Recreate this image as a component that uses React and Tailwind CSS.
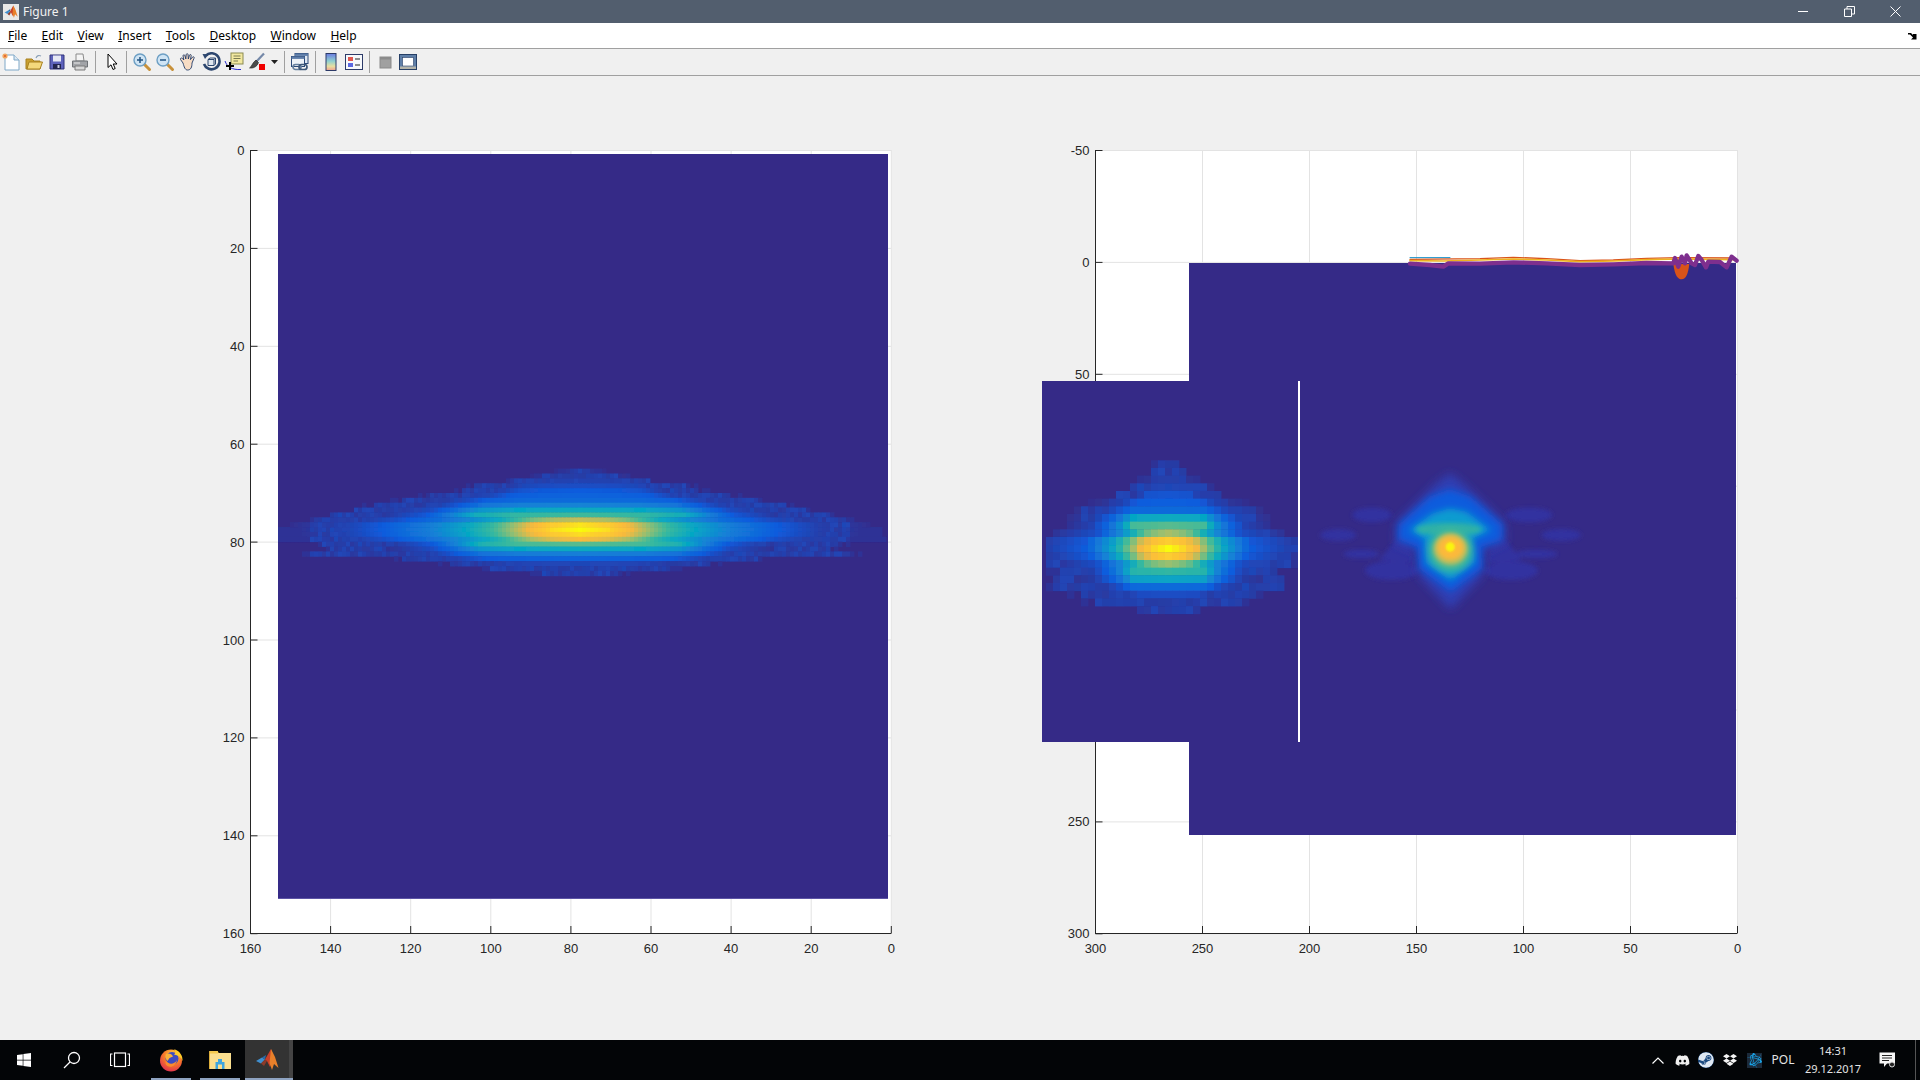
import React from 'react';
import { FaDiscord, FaSteam, FaDropbox, FaWindows, FaBattleNet } from 'react-icons/fa6';

const PARULA = [
  [0, [53, 42, 135]],
  [0.14, [15, 92, 221]],
  [0.29, [20, 129, 214]],
  [0.43, [6, 167, 196]],
  [0.57, [56, 185, 158]],
  [0.71, [146, 191, 115]],
  [0.86, [250, 186, 60]],
  [0.94, [252, 206, 46]],
  [1, [249, 251, 14]],
];

const interp = (tab, x) => {
  if (x <= tab[0][0]) return tab[0][1];
  for (let i = 1; i < tab.length; i++) {
    if (x <= tab[i][0]) {
      const t = (x - tab[i - 1][0]) / (tab[i][0] - tab[i - 1][0]);
      return tab[i - 1][1] + t * (tab[i][1] - tab[i - 1][1]);
    }
  }
  return tab[tab.length - 1][1];
};

const parula = (v) => {
  for (let i = 1; i < PARULA.length; i++) {
    if (v <= PARULA[i][0]) {
      const [a, ca] = PARULA[i - 1];
      const [b, cb] = PARULA[i];
      const t = (v - a) / (b - a);
      return `rgb(${ca.map((c, k) => Math.round(c + t * (cb[k] - c))).join(',')})`;
    }
  }
  return 'rgb(249,251,14)';
};

const noise = (a, b) => {
  const s = Math.sin(a * 12.9898 + b * 78.233) * 43758.5453;
  return s - Math.floor(s);
};

const wideCore = [[0, 1], [28, 0.96], [51, 0.86], [87, 0.58], [115, 0.43], [150, 0.28], [198, 0.14], [240, 0.06], [280, 0.025], [300, 0]];
const wideLobe = [[0, 1], [60, 0.95], [95, 0.8], [120, 0.45], [140, 0.22], [175, 0.08], [200, 0]];
const tallCore = [[0, 1], [12, 0.96], [25, 0.86], [40, 0.6], [50, 0.43], [75, 0.14], [115, 0.05], [130, 0]];
const tallLobe = [[0, 1], [36, 0.95], [46, 0.6], [60, 0.3], [75, 0.12], [95, 0.05], [110, 0]];

// row offset: [peak, width scale, half width of the faint outline, uses core profile]
const leftBlob = {
  cx: 580, cy: 529.5, cw: 4, ch: 4.87, core: wideCore, lobe: wideLobe, minCol: -75, maxCol: 76,
  gaps: { '-3': [160, 200], 4: [150, 195] },
  rows: {
    '-12': [0.03, 0.2, 10], '-11': [0.05, 0.35, 40], '-10': [0.07, 0.45, 70], '-9': [0.1, 0.6, 105], '-8': [0.14, 0.65, 120],
    '-7': [0.17, 0.75, 150], '-6': [0.2, 0.95, 180], '-5': [0.3, 1, 205], '-4': [0.45, 1.05, 225], '-3': [0.58, 1.1, 250],
    '-2': [0.78, 0.92, 265, 1], '-1': [0.97, 1, 270, 1], 0: [1, 1, 304, 1], 1: [0.96, 1, 304, 1], 2: [0.86, 0.95, 304, 1],
    3: [0.62, 1.05, 260], 4: [0.45, 1.05, 250], 5: [0.28, 1.05, 270], 6: [0.17, 1, 180], 7: [0.08, 0.8, 130],
    8: [0.05, 0.6, 90], 9: [0.03, 0.35, 40],
  },
};

const midBlob = {
  cx: 1168.5, cy: 548.5, cw: 7, ch: 7.67, core: tallCore, lobe: tallLobe, minCol: -17, maxCol: 18,
  gaps: { '-3': [70, 88], 4: [72, 92] },
  rows: {
    '-11': [0.02, 0.2, 10], '-10': [0.04, 0.3, 16], '-9': [0.06, 0.4, 18], '-8': [0.08, 0.5, 40], '-7': [0.12, 0.6, 50],
    '-6': [0.15, 0.9, 62], '-5': [0.2, 1.05, 85], '-4': [0.45, 1, 85], '-3': [0.62, 1, 90], '-2': [0.74, 0.95, 100, 1],
    '-1': [0.93, 1.1, 115, 1], 0: [1, 1.1, 128, 1], 1: [0.93, 1.05, 125, 1], 2: [0.72, 0.95, 120, 1], 3: [0.55, 1, 110],
    4: [0.42, 1, 115], 5: [0.2, 1, 115], 6: [0.1, 0.85, 90], 7: [0.05, 0.6, 75], 8: [0.02, 0.4, 30],
  },
};

function buildCells({ cx, cy, cw, ch, core, lobe, rows, minCol, maxCol, gaps }) {
  const cells = [];
  Object.keys(rows).forEach((key) => {
    const r = Number(key);
    const [amp, w, outline, isCore] = rows[key];
    const gap = gaps[key];
    for (let col = minCol; col <= maxCol; col++) {
      const dx = Math.abs(col * cw);
      let v = amp * interp(isCore ? core : lobe, dx / w);
      const inGap = gap && dx > gap[0] && dx < gap[1];
      if (dx < outline && !inGap) v = Math.max(v, dx > 270 ? 0.025 : 0.04 + 0.04 * noise(r, col));
      else if (dx < outline + 12 && noise(col, r) > 0.6) v = Math.max(v, 0.025);
      if (v > 0.012) {
        cells.push({ key: `${r}_${col}`, x: cx + col * cw - cw / 2, y: cy + r * ch - ch / 2, fill: parula(v) });
      }
    }
  });
  return cells;
}

function Heat({ blob }) {
  const cells = buildCells(blob);
  return (
    <g filter="url(#soft)">
      {cells.map((c) => (
        <rect key={c.key} x={c.x} y={c.y} width={blob.cw + 0.4} height={blob.ch + 0.4} fill={c.fill} />
      ))}
    </g>
  );
}

const AXIS = '#262626';
const GRID = '#e3e3e3';

function XTicks({ ticks }) {
  return ticks.map(([label, x]) => (
    <g key={label}>
      <line x1={x} x2={x} y1={150} y2={933} stroke={GRID} />
      <line x1={x} x2={x} y1={926} y2={933} stroke={AXIS} />
      <text x={x} y={953} textAnchor="middle" fontSize="13" fill={AXIS}>{label}</text>
    </g>
  ));
}

function YTicks({ ticks, x0, x1 }) {
  return ticks.map(([label, y]) => (
    <g key={label}>
      <line x1={x0} x2={x1} y1={y} y2={y} stroke={GRID} />
      <line x1={x0} x2={x0 + 7} y1={y} y2={y} stroke={AXIS} />
      <text x={x0 - 6} y={y + 4.5} textAnchor="end" fontSize="13" fill={AXIS}>{label}</text>
    </g>
  ));
}

function LeftPlot() {
  const xt = [160, 140, 120, 100, 80, 60, 40, 20, 0].map((v, i) => [v, 250.5 + i * 80.1]);
  const yt = [0, 20, 40, 60, 80, 100, 120, 140, 160].map((v, i) => [v, 150.5 + i * 97.9]);
  return (
    <svg width="700" height="830" viewBox="210 130 700 830" className="shrink-0 font-['Liberation_Sans',sans-serif]">
      <defs>
        <filter id="soft" x="-5%" y="-5%" width="110%" height="110%"><feGaussianBlur stdDeviation="0.7" /></filter>
      </defs>
      <rect x="250.5" y="150.5" width="641" height="783" fill="#fff" />
      <XTicks ticks={xt} />
      <YTicks ticks={yt} x0={250.5} x1={891} />
      <line x1="250.5" x2="250.5" y1="150" y2="933.5" stroke={AXIS} />
      <line x1="250" x2="891.5" y1="933.5" y2="933.5" stroke={AXIS} />
      <rect x="278" y="154" width="610" height="745" fill="#352a87" />
      <rect x="278" y="898" width="610" height="1" fill="#5d54a5" />
      <Heat blob={leftBlob} />
    </svg>
  );
}

function RightPlot() {
  const xt = [300, 250, 200, 150, 100, 50, 0].map((v, i) => [v, 1095.5 + i * 107]);
  const yt = [-50, 0, 50, 100, 150, 200, 250, 300].map((v, i) => [v, 150.5 + i * 111.9]);
  return (
    <svg width="730" height="830" viewBox="1030 130 730 830" className="shrink-0 font-['Liberation_Sans',sans-serif]">
      <defs>
        <filter id="b3" x="-50%" y="-50%" width="200%" height="200%"><feGaussianBlur stdDeviation="3" /></filter>
        <filter id="b6" x="-50%" y="-50%" width="200%" height="200%"><feGaussianBlur stdDeviation="6" /></filter>
        <filter id="b10" x="-50%" y="-50%" width="200%" height="200%"><feGaussianBlur stdDeviation="10" /></filter>
        <filter id="b14" x="-50%" y="-50%" width="200%" height="200%"><feGaussianBlur stdDeviation="14" /></filter>
      </defs>
      <rect x="1095.5" y="150.5" width="642" height="783" fill="#fff" />
      <XTicks ticks={xt} />
      <YTicks ticks={yt} x0={1095.5} x1={1737} />
      <line x1="1095.5" x2="1095.5" y1="150" y2="933.5" stroke={AXIS} />
      <line x1="1095" x2="1737.5" y1="933.5" y2="933.5" stroke={AXIS} />
      <rect x="1189" y="263" width="547" height="572" fill="#352a87" />
      <rect x="1042" y="381" width="256" height="361" fill="#352a87" />
      <Heat blob={midBlob} />
      <rect x="1298" y="381" width="2" height="361" fill="#fff" />
      {/* smooth spot, coords taken from the crop (2.8x wide, 3x high) */}
      <g transform="translate(1040 450) scale(0.357 0.3333)">
        <g fill="#3331a0" filter="url(#b6)">
          <ellipse cx="835" cy="255" rx="50" ry="18" />
          <ellipse cx="930" cy="195" rx="55" ry="22" />
          <ellipse cx="1370" cy="195" rx="65" ry="22" />
          <ellipse cx="1460" cy="255" rx="55" ry="18" />
          <ellipse cx="900" cy="312" rx="50" ry="13" />
          <ellipse cx="1390" cy="312" rx="60" ry="13" />
          <ellipse cx="985" cy="362" rx="75" ry="28" />
          <ellipse cx="1320" cy="362" rx="75" ry="28" />
          <path d="M1020 240 L950 330 L1050 340Z M1280 240 L1350 330 L1250 340Z" />
        </g>
        <path d="M1148 70 L1190 105 L1300 215 L1305 275 L1245 305 L1240 375 L1150 478 L1060 375 L1055 305 L995 280 L1000 215 L1105 105Z" fill="#2e3fb5" filter="url(#b14)" />
        <path d="M1148 118 L1205 140 L1295 225 L1292 270 L1235 290 L1238 355 L1150 425 L1062 355 L1058 290 L1005 268 L1005 225 L1092 140Z" fill="#0f5cdd" filter="url(#b10)" />
        <path d="M1148 175 L1195 185 L1262 240 L1210 268 L1218 335 L1150 392 L1082 340 L1078 268 L1035 240 L1100 190Z" fill="#0b9bd0" filter="url(#b10)" />
        <ellipse cx="1145" cy="238" rx="92" ry="20" fill="#2fb0a8" filter="url(#b6)" />
        <ellipse cx="1150" cy="300" rx="62" ry="66" fill="#3fb79a" filter="url(#b10)" />
        <ellipse cx="1150" cy="297" rx="48" ry="48" fill="#b8bd60" filter="url(#b6)" />
        <ellipse cx="1150" cy="294" rx="37" ry="36" fill="#fcb93a" filter="url(#b6)" />
        <ellipse cx="1149" cy="291" rx="13" ry="14" fill="#f9f50e" filter="url(#b3)" />
      </g>
      {/* line plots along y = 0 */}
      <g transform="translate(1380 240) scale(0.3333)" fill="none" strokeLinejoin="round" strokeLinecap="round">
        <path d="M90 53 H210" stroke="#0a8cc8" strokeWidth="3" />
        <path d="M880 72 C885 110 895 118 905 118 C918 118 925 100 928 72Z" fill="#d95319" />
        <path d="M90 58 L300 56 L400 52 L500 56 L600 62 L700 60 L800 55 L900 53 L1060 54" stroke="#d95319" strokeWidth="4" />
        <path d="M90 62 L190 63 L300 60 L400 57 L500 60 L600 65 L700 63 L800 59 L900 57 L1060 59" stroke="#edb120" strokeWidth="5" />
        <path d="M90 71 L150 75 L190 80 L205 70 L300 71 L400 67 L500 70 L600 75 L700 73 L800 69 L880 70 L885 54 L895 80 L905 50 L915 70 L920 46 L935 70 L945 75 L955 48 L965 60 L978 82 L985 65 L1020 66 L1040 82 L1055 50 L1070 62" stroke="#7e2f8e" strokeWidth="13" />
      </g>
    </svg>
  );
}

const MENUS = [
  ['F', 'ile'], ['E', 'dit'], ['V', 'iew'], ['I', 'nsert'], ['T', 'ools'], ['D', 'esktop'], ['W', 'indow'], ['H', 'elp'],
];

function MatlabIcon({ size = 16 }) {
  return (
    <svg width={size} height={size} viewBox="0 0 24 24">
      <path d="M1 13 L7 9.5 L10 11.5 L6 15.5Z" fill="#3f8fd0" />
      <path d="M7 9.5 L11 7 L10 11.5Z" fill="#2a6aa8" />
      <path d="M6 15.5 L10 11.5 L12 13 L9 18Z" fill="#8a3a2a" />
      <path d="M10 11.5 L16 1 L19 10 L15 19 L12 13Z" fill="#c9402a" />
      <path d="M16 1 L20 9 L23.5 20 L19 16 L17 22 L14.5 15Z" fill="#e8802a" />
    </svg>
  );
}

function Ico({ children }) {
  return <svg width="20" height="20" viewBox="0 0 20 20">{children}</svg>;
}

const NewIcon = () => (
  <Ico>
    <path d="M4 3 H13 L18 8 V18 H4Z" fill="#fff" stroke="#7fa8c8" />
    <path d="M13 3 V8 H18" fill="#dce8f2" stroke="#7fa8c8" />
    <circle cx="4" cy="4" r="2.6" fill="#f2a75e" />
    <circle cx="4" cy="4" r="1" fill="#e05a2a" />
  </Ico>
);
const OpenIcon = () => (
  <Ico>
    <path d="M2 7 H8 L10 9 H16 V17 H2Z" fill="#c9a030" stroke="#a8801e" />
    <path d="M3 17 L5 10 H18.5 L16 17Z" fill="#f4d97c" stroke="#a8801e" />
    <path d="M12 6 C13 3.5 15 3 17 4" fill="none" stroke="#8aa0b8" strokeWidth="1.2" />
  </Ico>
);
const SaveIcon = () => (
  <Ico>
    <path d="M3 3 H17 V17 H3Z" fill="#5d62bb" stroke="#30327a" />
    <rect x="6" y="3.5" width="8" height="6" fill="#e6e8f4" />
    <rect x="6" y="12" width="8" height="5" fill="#23254f" />
    <rect x="10.5" y="13" width="2" height="3" fill="#c8cbe0" />
  </Ico>
);
const PrintIcon = () => (
  <Ico>
    <path d="M6 2 H13 L14 9 H6Z" fill="#f4f4f4" stroke="#8a8a8a" />
    <path d="M2.5 9 H17.5 V15 H2.5Z" fill="#a2a4a8" stroke="#6f7276" />
    <path d="M5 14 H15 V18 H5Z" fill="#d8d8d8" stroke="#7a7a7a" />
    <path d="M4 11 H10" stroke="#e8e8e8" />
  </Ico>
);
const ArrowIcon = () => (
  <Ico>
    <path d="M6 2 L6 15.5 L9 12.8 L11 17.5 L13.2 16.5 L11.2 12 L15 12Z" fill="#fff" stroke="#000" />
  </Ico>
);
const ZoomIcon = ({ minus }) => (
  <Ico>
    <path d="M11.5 11.5 L17.5 17.5" stroke="#c8913a" strokeWidth="3" strokeLinecap="round" />
    <circle cx="8" cy="8" r="6" fill="#cfe4f4" stroke="#6d9fc4" strokeWidth="1.4" />
    <path d="M5 8 H11" stroke="#2a5a88" strokeWidth="1.6" />
    {!minus && <path d="M8 5 V11" stroke="#2a5a88" strokeWidth="1.6" />}
  </Ico>
);
const HandIcon = () => (
  <Ico>
    <path d="M5 11 L2.5 7.5 C2 6 3.5 5.5 4.5 6.5 L5.8 8 L5 3.8 C5 2.5 6.8 2.5 7 3.8 L7.8 7 L8.2 2.6 C8.3 1.4 10 1.4 10.1 2.6 L10.3 7 L11.5 3.2 C11.9 2 13.5 2.5 13.2 3.8 L12.4 7.6 L14.6 5 C15.6 4.2 16.6 5.2 16 6.3 L14 11 C14 15 13 18 9.5 18 C7 18 6.2 15 5 11Z" fill="#f7dcc4" stroke="#1f3a68" strokeWidth="0.9" />
  </Ico>
);
const RotateIcon = () => (
  <Ico>
    <path d="M5 3.5 A8 8 0 1 1 3 12" fill="none" stroke="#2c466e" strokeWidth="2.6" />
    <path d="M1.5 2 L7.5 2.2 L4 7Z" fill="#2c466e" />
    <path d="M7 7.5 H13 V13.5 H7Z M7 7.5 L9 6 H14.5 L13 7.5 M13 13.5 L14.5 12 V6" fill="#dfe6ee" stroke="#2c466e" />
  </Ico>
);
const CursorIcon = () => (
  <Ico>
    <rect x="7" y="1" width="12" height="11" fill="#f2e8a0" stroke="#8a8a50" />
    <path d="M9.5 4 H16.5 M9.5 6.5 H16.5 M9.5 9 H14" stroke="#7a7a50" />
    <path d="M1 9 C3 15 8 18 17 17.5" fill="none" stroke="#2a2ad0" />
    <path d="M6 10 V18 M2 14 H10" stroke="#000" strokeWidth="2" />
  </Ico>
);
const BrushIcon = () => (
  <Ico>
    <path d="M17 1.5 L9 10" stroke="#7488a8" strokeWidth="2.2" />
    <path d="M9 8 L11.5 10.5 C10 15 6 16.5 2.5 16 C5 14.5 5 11 9 8Z" fill="#4b4b4b" stroke="#222" strokeWidth="0.6" />
    <rect x="12" y="12" width="6" height="6" fill="#f00000" />
  </Ico>
);
const LinkIcon = () => (
  <Ico>
    <rect x="5" y="1.5" width="13" height="10" fill="#dfe8f2" stroke="#2c4a78" />
    <rect x="5" y="1.5" width="13" height="2.4" fill="#5c7ca8" />
    <rect x="1.5" y="4.5" width="13" height="10" fill="#eef3f8" stroke="#2c4a78" />
    <rect x="1.5" y="4.5" width="13" height="2.4" fill="#5c7ca8" />
    <rect x="3" y="12.5" width="8" height="5" rx="2.5" fill="none" stroke="#66809e" strokeWidth="1.7" />
    <rect x="9" y="12.5" width="8" height="5" rx="2.5" fill="none" stroke="#3e5878" strokeWidth="1.7" />
  </Ico>
);
const ColorbarIcon = () => (
  <Ico>
    <defs>
      <linearGradient id="cb" x1="0" x2="0" y1="0" y2="1">
        <stop offset="0" stopColor="#6a7ae0" />
        <stop offset="0.45" stopColor="#8fd0d0" />
        <stop offset="0.75" stopColor="#e8e0a0" />
        <stop offset="1" stopColor="#f0a090" />
      </linearGradient>
    </defs>
    <rect x="5" y="1.5" width="10" height="17" fill="url(#cb)" stroke="#2c3a68" />
  </Ico>
);
const LegendIcon = () => (
  <Ico>
    <rect x="1.5" y="2.5" width="17" height="15" fill="#f6f8fb" stroke="#2c3a68" />
    <rect x="4" y="5" width="5" height="4" fill="#e0564f" />
    <rect x="4" y="11" width="5" height="4" fill="#5b68e0" />
    <path d="M11 7 H16 M11 13 H16" stroke="#222" strokeWidth="1.2" />
  </Ico>
);
const HideIcon = () => (
  <Ico>
    <rect x="5" y="5" width="11" height="11" fill="#a0a0a0" stroke="#8a8a8a" />
    <rect x="5" y="5" width="11" height="2.5" fill="#8a8a8a" />
  </Ico>
);
const ToolsIcon = () => (
  <Ico>
    <rect x="1.5" y="2.5" width="17" height="15" fill="#5f7fa8" stroke="#263f66" />
    <rect x="4.5" y="5.5" width="11" height="8.5" fill="#fff" stroke="#263f66" strokeWidth="0.6" />
    <rect x="2" y="14.5" width="16" height="2.5" fill="#b4b4aa" />
  </Ico>
);

const ToolBtn = ({ children }) => (
  <div className="w-[23px] h-full flex items-center justify-center">{children}</div>
);
const Sep = ({ w }) => (
  <div className={`${w} h-full flex items-center justify-center`}>
    <div className="w-px h-[22px] bg-[#a0a0a0]" />
  </div>
);

function Firefox() {
  return (
    <svg width="24" height="24" viewBox="0 0 24 24">
      <defs>
        <radialGradient id="ffo" cx="0.6" cy="0.25" r="0.85">
          <stop offset="0" stopColor="#ffd23a" />
          <stop offset="0.5" stopColor="#f7782a" />
          <stop offset="1" stopColor="#dc2356" />
        </radialGradient>
      </defs>
      <circle cx="12" cy="12.5" r="11" fill="url(#ffo)" />
      <circle cx="13" cy="10.5" r="6.5" fill="#3e4bc0" />
      <path d="M15 1 C21 3 24 8 23.5 13 C22 9 19 7 15 6.5 C17 5 17 3 15 1Z" fill="#ffcb2a" />
      <path d="M7 12 C9 17 15 17 18 12 C17 18 12 20 8.5 18 C6.5 17 6 14 7 12Z" fill="#fb8c2e" />
      <path d="M7 6 C10 5 13 6 14 8.5 L10.5 10 L8.5 13 C6 11 6 8 7 6Z" fill="#f9b03a" />
    </svg>
  );
}

function Explorer() {
  return (
    <svg width="24" height="20" viewBox="0 0 24 20">
      <path d="M1 1 H9 L11 3 H23 V5 H1Z" fill="#e3b94a" />
      <rect x="1" y="3" width="22" height="16" fill="#fadf8f" />
      <rect x="1" y="1" width="9" height="2.5" fill="#f3c94e" />
      <rect x="1" y="1" width="1" height="18" fill="#dcae3c" />
      <path d="M7.5 19 V12 H10 V9 H14 V12 H16.5 V19 H14 V14.5 H10 V19Z" fill="#3ea6e0" />
    </svg>
  );
}

function TaskItem({ width, active, line, children }) {
  return (
    <div className={`relative h-full flex items-center justify-center ${width} ${active ? 'bg-[#333333]' : ''}`}>
      {children}
      {line && <div className={`absolute bottom-0 h-[2px] bg-[#8ea3c1] ${line}`} />}
    </div>
  );
}

export default function App() {
  return (
    <div className="w-[1920px] h-screen overflow-hidden flex flex-col bg-[#f0f0f0] font-['Noto_Sans',sans-serif]">
      <div className="h-[23px] shrink-0 bg-[#525e6e] flex items-center text-white">
        <div className="ml-[3px] w-[16px] h-[16px] bg-[#e8e8e8] flex items-center justify-center">
          <MatlabIcon size={14} />
        </div>
        <span className="ml-[4px] text-xs text-[#f2f2f2]">Figure 1</span>
        <div className="ml-auto mr-[2px] flex h-full">
          <div className="w-[46px] flex items-center justify-center">
            <svg width="11" height="11" viewBox="0 0 11 11"><path d="M0 5.5 H10" stroke="#fff" /></svg>
          </div>
          <div className="w-[46px] flex items-center justify-center">
            <svg width="11" height="11" viewBox="0 0 11 11" fill="none" stroke="#fff"><path d="M0.5 3 H7.5 V10.5 H0.5Z M3 3 V0.5 H10.5 V8 H7.5" /></svg>
          </div>
          <div className="w-[46px] flex items-center justify-center">
            <svg width="11" height="11" viewBox="0 0 11 11" stroke="#fff"><path d="M0.5 0.5 L10.5 10.5 M10.5 0.5 L0.5 10.5" /></svg>
          </div>
        </div>
      </div>

      <div className="h-[25px] shrink-0 bg-white flex items-center text-xs text-black pl-[8px]">
        {MENUS.map(([first, rest]) => (
          <span key={first} className="mr-[14.4px]"><span className="underline">{first}</span>{rest}</span>
        ))}
        <svg className="ml-auto mr-[3px]" width="9" height="8" viewBox="0 0 9 8">
          <path d="M0 1 H3 L5 3 V2 H8.5 V7.5 H3 L5 5.5 L2 2.5 H0Z" fill="#000" />
        </svg>
      </div>

      <div className="h-[28px] shrink-0 flex items-center bg-[#f0f0f0] border-y border-[#a0a0a0] pb-px">
        <div className="-ml-px" />
        <ToolBtn><NewIcon /></ToolBtn>
        <ToolBtn><OpenIcon /></ToolBtn>
        <ToolBtn><SaveIcon /></ToolBtn>
        <ToolBtn><PrintIcon /></ToolBtn>
        <Sep w="w-[9px]" />
        <ToolBtn><ArrowIcon /></ToolBtn>
        <Sep w="w-[7px]" />
        <ToolBtn><ZoomIcon /></ToolBtn>
        <ToolBtn><ZoomIcon minus /></ToolBtn>
        <ToolBtn><HandIcon /></ToolBtn>
        <ToolBtn><RotateIcon /></ToolBtn>
        <ToolBtn><CursorIcon /></ToolBtn>
        <ToolBtn><BrushIcon /></ToolBtn>
        <div className="w-[13px] flex justify-center">
          <svg width="7" height="4" viewBox="0 0 7 4"><path d="M0 0 H7 L3.5 4Z" fill="#222" /></svg>
        </div>
        <Sep w="w-[7px]" />
        <ToolBtn><LinkIcon /></ToolBtn>
        <Sep w="w-[8px]" />
        <ToolBtn><ColorbarIcon /></ToolBtn>
        <ToolBtn><LegendIcon /></ToolBtn>
        <Sep w="w-[8px]" />
        <ToolBtn><HideIcon /></ToolBtn>
        <ToolBtn><ToolsIcon /></ToolBtn>
      </div>

      <div className="flex-1 min-h-0 flex items-start gap-[120px] pl-[210px] pt-[54px] overflow-hidden">
        <LeftPlot />
        <RightPlot />
      </div>

      <div className="h-[40px] shrink-0 bg-[#030507] flex items-center text-xs text-[#e4e4e4]">
        <TaskItem width="w-[48px]"><FaWindows size={16} color="#fff" /></TaskItem>
        <TaskItem width="w-[48px]">
          <svg width="18" height="18" viewBox="0 0 18 18" fill="none" stroke="#fff" strokeWidth="1.3">
            <circle cx="11" cy="7" r="5.5" /><path d="M7 11 L1 17" />
          </svg>
        </TaskItem>
        <TaskItem width="w-[48px]">
          <svg width="20" height="16" viewBox="0 0 20 16" fill="none" stroke="#fff" strokeWidth="1.2">
            <rect x="4.5" y="1" width="11" height="13.5" /><path d="M2.5 2 H0.5 V13.5 H2.5 M17.5 2 H19.5 V13.5 H17.5" />
          </svg>
        </TaskItem>
        <div className="w-[3px]" />
        <TaskItem width="w-[48px]" line="left-[4px] right-[4px]"><Firefox /></TaskItem>
        <TaskItem width="w-[49px]" line="left-[5px] right-[4px]"><Explorer /></TaskItem>
        <div className="w-px" />
        <TaskItem width="w-[44px]" active line="left-0 -right-[4px]"><MatlabIcon size={24} /></TaskItem>
        <div className="w-[4px] h-full bg-[#444444]" />

        <div className="ml-auto flex items-center h-full">
          <div className="w-[24px] flex justify-center">
            <svg width="12" height="7" viewBox="0 0 12 7" fill="none" stroke="#fff" strokeWidth="1.2"><path d="M0.5 6.5 L6 1 L11.5 6.5" /></svg>
          </div>
          <div className="w-[24px] flex justify-center"><FaDiscord size={15} color="#f0f0f0" /></div>
          <div className="w-[24px] flex justify-center"><FaSteam size={16} color="#dfe8f2" className="rounded-full bg-[#1b4a80]" /></div>
          <div className="w-[24px] flex justify-center"><FaDropbox size={14} color="#f4f4f4" /></div>
          <div className="w-[24px] flex justify-center"><FaBattleNet size={15} color="#19a4e8" className="bg-[#1c2a3a]" /></div>
          <div className="w-[34px] text-center">POL</div>
          <div className="w-[66px] flex flex-col items-center leading-[18px] text-[11px]">
            <span>14:31</span>
            <span>29.12.2017</span>
          </div>
          <div className="w-[42px] flex justify-center">
            <svg width="17" height="16" viewBox="0 0 17 16">
              <path d="M0.5 0.5 H16 V11.5 H8 L5 15 V11.5 H0.5Z" fill="#f6f6f6" />
              <path d="M3 3.5 H13 M3 6 H13 M3 8.5 H10" stroke="#222" />
              <circle cx="13" cy="12.5" r="2.5" fill="#222" stroke="#ddd" />
            </svg>
          </div>
          <div className="w-[12px] h-full flex justify-center pl-[2px]">
            <div className="w-px h-full bg-[#555555]" />
          </div>
        </div>
      </div>
    </div>
  );
}
